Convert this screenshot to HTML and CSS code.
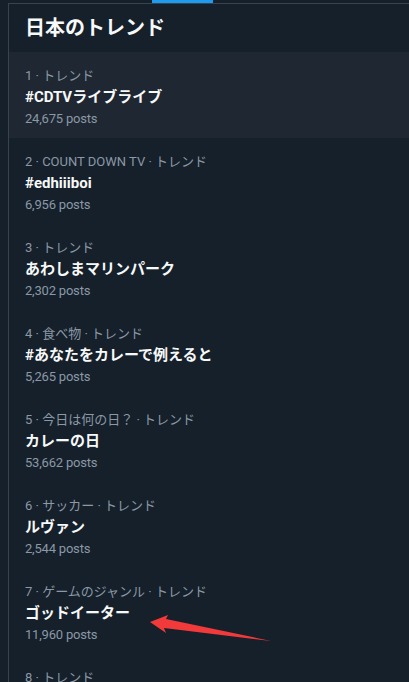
FILE: index.html
```html
<!DOCTYPE html>
<html lang="ja">
<head>
<meta charset="utf-8">
<link rel="stylesheet" href="styles.css">
</head>
<body>
<div class="page">
  <div class="topbar"><div class="tab-indicator"></div></div>
  <div class="panel">
    <h2 class="heading">日本のトレンド</h2>
    <div class="trend hover">
      <div class="meta">1 · トレンド</div>
      <div class="title">#CDTVライブライブ</div>
      <div class="count">24,675 posts</div>
    </div>
    <div class="trend">
      <div class="meta">2 · COUNT DOWN TV · トレンド</div>
      <div class="title">#edhiiiboi</div>
      <div class="count">6,956 posts</div>
    </div>
    <div class="trend">
      <div class="meta">3 · トレンド</div>
      <div class="title">あわしまマリンパーク</div>
      <div class="count">2,302 posts</div>
    </div>
    <div class="trend">
      <div class="meta">4 · 食べ物 · トレンド</div>
      <div class="title">#あなたをカレーで例えると</div>
      <div class="count">5,265 posts</div>
    </div>
    <div class="trend">
      <div class="meta">5 · 今日は何の日？ · トレンド</div>
      <div class="title">カレーの日</div>
      <div class="count">53,662 posts</div>
    </div>
    <div class="trend">
      <div class="meta">6 · サッカー · トレンド</div>
      <div class="title">ルヴァン</div>
      <div class="count">2,544 posts</div>
    </div>
    <div class="trend">
      <div class="meta">7 · ゲームのジャンル · トレンド</div>
      <div class="title">ゴッドイーター</div>
      <div class="count">11,960 posts</div>
    </div>
    <div class="trend last">
      <div class="meta">8 · トレンド</div>
    </div>
  </div>
  <svg class="arrow" width="409" height="682" viewBox="0 0 409 682">
    <polygon points="150,622 168,615 166,619 271,641 164,628 166,633" fill="#f23a3a"/>
  </svg>
</div>
</body>
</html>
```

FILE: styles.css
```css
html, body {
  margin: 0;
  padding: 0;
  background: #15202b;
  width: 409px;
  height: 682px;
  overflow: hidden;
}
.page {
  position: relative;
  width: 409px;
  height: 682px;
  overflow: hidden;
  font-family: "Roboto", "Noto Sans CJK JP", sans-serif;
  color: #f7f9f9;
}
.topbar {
  height: 3px;
  border-bottom: 1px solid #38444d;
  margin-left: 8px;
  position: relative;
}
.tab-indicator {
  position: absolute;
  left: 144px;
  top: 0;
  width: 61px;
  height: 3px;
  background: #1d9bf0;
}
.panel {
  margin-left: 8px;
  border-left: 1px solid #38444d;
  height: 678px;
}
.heading {
  margin: 0;
  padding-left: 16px;
  font-size: 20px;
  font-weight: 700;
  line-height: 48px;
  height: 48px;
}
.trend {
  height: 86px;
  box-sizing: border-box;
  padding: 15px 16px 0;
}
.trend.last {
  height: 30px;
}
.trend.hover {
  background: #1e2732;
}
.meta {
  font-size: 13px;
  line-height: 18px;
  color: #8b98a5;
}
.title {
  font-size: 15px;
  font-weight: 700;
  line-height: 24px;
  color: #f7f9f9;
}
.count {
  font-size: 13px;
  line-height: 20px;
  letter-spacing: -0.2px;
  color: #8b98a5;
}
.arrow {
  position: absolute;
  left: 0;
  top: 0;
  pointer-events: none;
}
```
